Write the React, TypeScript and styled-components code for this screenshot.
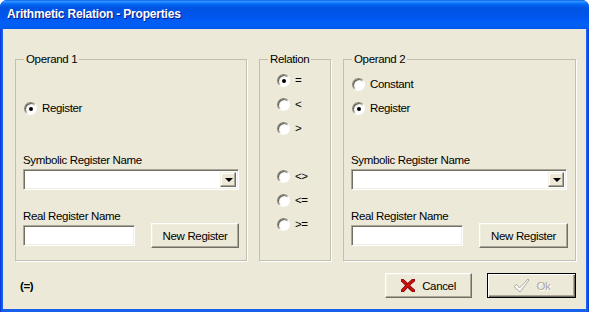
import React from "react";
import styled, { createGlobalStyle } from "styled-components";

const GlobalStyle = createGlobalStyle`
  html, body {
    margin: 0;
    padding: 0;
    background: #ffffff;
  }
  body {
    font-family: "Liberation Sans", Arial, sans-serif;
  }
`;

const uiFont = `"Liberation Sans", Arial, sans-serif`;

const Window = styled.div`
    width: 589px;
    height: 312px;
    display: flex;
    flex-direction: column;
    border-radius: 7px 7px 0 0;
    overflow: hidden;
    background: linear-gradient(to right, #0831d9 0px, #1660ec 2px, #1660ec 587px, #0831d9 589px);
`;

const TitleBar = styled.div`
    height: 29px;
    flex: none;
    display: flex;
    align-items: center;
    padding: 0 0 1px 7px;
    box-sizing: border-box;
    background: linear-gradient(
        #0058ee 0%,
        #3593ff 4%,
        #288eff 7%,
        #127dff 10%,
        #036ffc 13%,
        #0262ee 18%,
        #0057e5 24%,
        #0054e3 30%,
        #0055eb 56%,
        #005bf5 70%,
        #0260f4 86%,
        #0058ea 100%
    );
    color: #ffffff;
    font: bold 12px "Liberation Sans", Arial, sans-serif;
    letter-spacing: -0.2px;
    text-shadow: 1px 1px 0 #0a1883;
`;

const Client = styled.div`
    flex: 1;
    margin: 0 3px 3px;
    padding: 24px 10px 0 12px;
    background: #ece9d8;
    display: flex;
    flex-direction: column;
    font-family: ${uiFont};
    font-size: 11.5px;
    letter-spacing: -0.35px;
    color: #000000;
`;

const GroupRow = styled.div`
    display: flex;
    gap: 12px;
`;

const Group = styled.fieldset<{ $width: number }>`
    width: ${(p) => p.$width}px;
    height: 208px;
    box-sizing: border-box;
    margin: 0;
    padding: 0 7px;
    min-width: 0;
    border: 1px solid #c2bfb1;
    box-shadow: 1px 1px 0 #ffffff;
`;

const Legend = styled.legend`
    margin-left: 1px;
    padding: 0 2px;
    font-size: 11.5px;
    line-height: 13px;
`;

const RadioStack = styled.div<{ $top: number; $left: number }>`
    display: flex;
    flex-direction: column;
    gap: 8px;
    margin-top: ${(p) => p.$top}px;
    margin-left: ${(p) => p.$left}px;
`;

const RadioRow = styled.label<{ $skip?: boolean }>`
    display: flex;
    align-items: center;
    gap: 5px;
    height: 16px;
    line-height: 16px;
    margin-top: ${(p) => (p.$skip ? 24 : 0)}px;
`;

const RadioDot = styled.span<{ $checked?: boolean }>`
    position: relative;
    width: 13px;
    height: 13px;
    box-sizing: border-box;
    border-radius: 50%;
    border: 1px solid;
    border-color: #8a877a #ffffff #ffffff #8a877a;
    box-shadow: inset 1px 1px 0 #5f5d55;
    background: radial-gradient(circle at 65% 65%, #ffffff 35%, #e2e0d6 100%);
    flex: none;

    &::after {
        content: "";
        display: ${(p) => (p.$checked ? "block" : "none")};
        position: absolute;
        left: 4px;
        top: 4px;
        width: 4px;
        height: 4px;
        border-radius: 50%;
        background: #000000;
    }
`;

const FieldLabel = styled.div<{ $gap: number }>`
    margin-top: ${(p) => p.$gap}px;
    height: 14px;
    line-height: 14px;
`;

const sunken = `
    box-sizing: border-box;
    border: 1px solid;
    border-color: #aca899 #ffffff #ffffff #aca899;
    box-shadow: inset 1px 1px 0 #716f64, inset -1px -1px 0 #f1efe2;
    background: #ffffff;
`;

const ComboBox = styled.div`
    ${sunken}
    margin-top: 2px;
    width: 216px;
    height: 21px;
    display: flex;
    justify-content: flex-end;
    padding: 2px;
`;

const DropButton = styled.div`
    width: 16px;
    height: 15px;
    box-sizing: border-box;
    border: 1px solid;
    border-color: #f1efe2 #716f64 #716f64 #f1efe2;
    box-shadow: inset -1px -1px 0 #aca899, inset 1px 1px 0 #ffffff;
    background: #ece9d8;
    display: flex;
    align-items: center;
    justify-content: center;

    &::after {
        content: "";
        border-left: 4px solid transparent;
        border-right: 4px solid transparent;
        border-top: 4px solid #000000;
        margin-left: 1px;
    }
`;

const InputRow = styled.div`
    display: flex;
    align-items: center;
    height: 25px;
    gap: 16px;
`;

const TextField = styled.input`
    ${sunken}
    width: 112px;
    height: 21px;
    margin: 0;
    padding: 0 3px;
    font: 11.5px ${uiFont};
    outline: none;
`;

const PushButton = styled.button<{ $width: number; $default?: boolean }>`
    width: ${(p) => p.$width}px;
    height: 25px;
    margin: 0;
    padding: 0;
    box-sizing: border-box;
    display: flex;
    align-items: center;
    justify-content: center;
    gap: 7px;
    font: 11.5px ${uiFont};
    letter-spacing: -0.35px;
    color: ${(p) => (p.$default ? "#aca899" : "#000000")};
    text-shadow: ${(p) => (p.$default ? "1px 1px 0 #ffffff" : "none")};
    background: #ece9d8;
    border: 1px solid;
    border-color: ${(p) => (p.$default ? "#000000" : "#ffffff #716f64 #716f64 #ffffff")};
    box-shadow: ${(p) =>
        p.$default
            ? "inset 1px 1px 0 #ffffff, inset -1px -1px 0 #716f64, inset -2px -2px 0 #aca899"
            : "inset -1px -1px 0 #aca899, inset 1px 1px 0 #f1efe2"};
`;

const Footer = styled.div`
    display: flex;
    align-items: center;
    height: 25px;
    margin-top: 12px;
`;

const Expression = styled.div`
    margin-left: 5px;
    font-weight: bold;
    flex: 1;
`;

const ButtonBar = styled.div`
    display: flex;
    gap: 15px;
`;

const CancelIcon = () => (
  <svg width="14" height="13" viewBox="0 0 14 13">
    <path d="M1.5 1.5 C5 4.5 8 8 12.5 11.8" stroke="#7a0000" strokeWidth="3.6" fill="none" strokeLinecap="round" />
    <path d="M12.5 1.2 C9 4 5 8 1.5 11.8" stroke="#7a0000" strokeWidth="3.6" fill="none" strokeLinecap="round" />
    <path d="M1.5 1.5 C5 4.5 8 8 12.5 11.8" stroke="#d41010" strokeWidth="2" fill="none" strokeLinecap="round" />
    <path d="M12.5 1.2 C9 4 5 8 1.5 11.8" stroke="#d41010" strokeWidth="2" fill="none" strokeLinecap="round" />
  </svg>
);

const OkIcon = () => (
  <svg width="17" height="15" viewBox="0 0 17 15">
    <path
      d="M1 8.5 L3.5 6.5 L6.5 10 L15 1 L16 2 L7 14 Z"
      fill="#ffffff"
      stroke="#aca899"
      strokeWidth="1"
      strokeLinejoin="round"
    />
  </svg>
);

type RadioItem = { label: string; checked?: boolean; skip?: boolean };

const RadioGroup: React.FC<{ items: RadioItem[]; top: number; left: number }> = ({ items, top, left }) => (
  <RadioStack $top={top} $left={left}>
    {items.map((item) => (
      <RadioRow key={item.label} $skip={item.skip}>
        <RadioDot $checked={item.checked} />
        <span>{item.label}</span>
      </RadioRow>
    ))}
  </RadioStack>
);

const OperandGroup: React.FC<{ title: string; items: RadioItem[]; top: number; width: number }> = ({
  title,
  items,
  top,
  width,
}) => (
  <Group $width={width}>
    <Legend>{title}</Legend>
    <RadioGroup items={items} top={top} left={1} />
    <FieldLabel $gap={37}>Symbolic Register Name</FieldLabel>
    <ComboBox>
      <DropButton />
    </ComboBox>
    <FieldLabel $gap={19}>Real Register Name</FieldLabel>
    <InputRow>
      <TextField defaultValue="" />
      <PushButton $width={89}>New Register</PushButton>
    </InputRow>
  </Group>
);

const relations: RadioItem[] = [
  { label: "=", checked: true },
  { label: "<" },
  { label: ">" },
  { label: "<>", skip: true },
  { label: "<=" },
  { label: ">=" },
];

const App: React.FC = () => (
  <>
    <GlobalStyle />
    <Window>
      <TitleBar>Arithmetic Relation - Properties</TitleBar>
      <Client>
        <GroupRow>
          <OperandGroup title="Operand 1" width={232} top={34} items={[{ label: "Register", checked: true }]} />
          <Group $width={72}>
            <Legend>Relation</Legend>
            <RadioGroup items={relations} top={6} left={10} />
          </Group>
          <OperandGroup
            title="Operand 2"
            width={233}
            top={10}
            items={[{ label: "Constant" }, { label: "Register", checked: true }]}
          />
        </GroupRow>
        <Footer>
          <Expression>(=)</Expression>
          <ButtonBar>
            <PushButton $width={87}>
              <CancelIcon />
              Cancel
            </PushButton>
            <PushButton $width={89} $default>
              <OkIcon />
              Ok
            </PushButton>
          </ButtonBar>
        </Footer>
      </Client>
    </Window>
  </>
);

export default App;
